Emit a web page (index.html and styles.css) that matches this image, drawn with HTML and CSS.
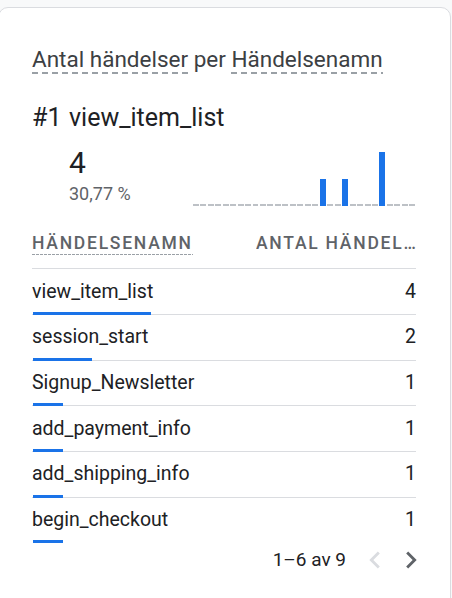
FILE: index.html
```html
<!DOCTYPE html>
<html lang="sv">
<head>
    <meta charset="UTF-8">
    <meta name="viewport" content="width=device-width, initial-scale=1.0">
    <title>Antal händelser per Händelsenamn</title>
    <link rel="stylesheet" href="styles.css">
</head>
<body>

    <div class="card">
        <h2 class="title"><span class="dim">Antal händelser</span> per <span class="dim">Händelsenamn</span></h2>

        <div class="top">
            <div class="rank">#1</div>
            <div class="top-name">view_item_list</div>
            <div></div>
            <div class="top-row">
                <div class="top-stats">
                    <div class="top-value">4</div>
                    <div class="top-pct">30,77 %</div>
                </div>
                <div class="spark" id="spark"></div>
            </div>
        </div>

        <div class="table">
            <div class="head">
                <div class="h-name"><span class="dim-sm">Händelsenamn</span></div>
                <div class="h-value"><span class="dim-sm">Antal händelser</span></div>
            </div>
            <div id="rows"></div>
        </div>

        <div class="pager">
            <span class="pager-text">1–6 av 9</span>
            <span class="pager-btn disabled">
                <svg viewBox="0 0 24 24" width="34" height="34"><path d="M15.41 7.41L14 6l-6 6 6 6 1.41-1.41L10.83 12z"/></svg>
            </span>
            <span class="pager-btn">
                <svg viewBox="0 0 24 24" width="34" height="34"><path d="M10 6L8.59 7.41 13.17 12l-4.58 4.59L10 18l6-6z"/></svg>
            </span>
        </div>
    </div>

    <script>
        // 30 days, only three with events
        const days = new Array(30).fill(0);
        days[17] = 1;
        days[20] = 1;
        days[25] = 2;

        const spark = document.getElementById('spark');
        days.forEach(v => {
            const slot = document.createElement('div');
            slot.className = 'slot';
            const bar = document.createElement('div');
            if (v > 0) {
                bar.className = 'bar';
                bar.style.height = (v * 27) + 'px';
            } else {
                bar.className = 'dash';
            }
            slot.appendChild(bar);
            spark.appendChild(slot);
        });

        const events = [
            ['view_item_list', 4],
            ['session_start', 2],
            ['Signup_Newsletter', 1],
            ['add_payment_info', 1],
            ['add_shipping_info', 1],
            ['begin_checkout', 1]
        ];

        const rows = document.getElementById('rows');
        events.forEach(([name, count]) => {
            const row = document.createElement('div');
            row.className = 'row';
            row.innerHTML = `
                <div class="line">
                    <span class="name">${name}</span>
                    <span class="count">${count}</span>
                </div>
                <div class="meter" style="width: ${count * 29.5}px"></div>`;
            rows.appendChild(row);
        });
    </script>
</body>
</html>
```

FILE: styles.css
```css
body {
    margin: 0;
    padding-top: 7px;
    background-color: #f8f9fa;
    font-family: Roboto, "Noto Sans", sans-serif;
    color: #3c4043;
    overflow: hidden;
}
.card {
    box-sizing: border-box;
    width: 453px;
    height: 620px;
    margin-left: -2px;
    padding: 37px 34px 0 33px;
    background: #fff;
    border: 1px solid #dadce0;
    border-radius: 10px;
}
.title {
    margin: 0;
    font-size: 22.5px;
    font-weight: 400;
    line-height: 28px;
    color: #3c4043;
}
.dim {
    padding-bottom: 1.5px;
    background-image: linear-gradient(to right, #9aa0a6 60%, transparent 60%);
    background-size: 10px 2px;
    background-repeat: repeat-x;
    background-position: left bottom;
}
.top {
    display: grid;
    grid-template-columns: 37px 1fr;
    margin-top: 30px;
    color: #202124;
}
.rank, .top-name {
    font-size: 25px;
    line-height: 30px;
}
.top-row {
    display: flex;
    align-items: flex-end;
    margin-top: 13px;
}
.top-stats {
    padding-bottom: 1px;
}
.top-value {
    font-size: 30px;
    line-height: 34px;
}
.top-pct {
    margin-top: 3.4px;
    font-size: 18px;
    line-height: 22px;
    color: #5f6368;
}
.spark {
    display: flex;
    align-items: flex-end;
    width: 224px;
    height: 56px;
    margin-left: auto;
}
.slot {
    flex: 1;
    padding: 0 0.75px;
}
.dash {
    height: 2px;
    background: #bdc1c6;
}
.bar {
    background: #1a73e8;
}
.table {
    margin-top: 26px;
}
.head {
    display: flex;
    justify-content: space-between;
    padding-bottom: 14px;
    border-bottom: 1px solid #dadce0;
    font-size: 17.5px;
    font-weight: 500;
    line-height: 22px;
    letter-spacing: 1.75px;
    text-transform: uppercase;
    color: #5f6368;
}
.h-value {
    width: 160px;
    overflow: hidden;
    white-space: nowrap;
    text-overflow: ellipsis;
}
.dim-sm {
    padding-bottom: 1.5px;
    background-image: linear-gradient(to right, #9aa0a6 70%, transparent 70%);
    background-size: 4px 1px;
    background-repeat: repeat-x;
    background-position: left bottom;
}
.row {
    box-sizing: border-box;
    display: flex;
    flex-direction: column;
    height: 45.67px;
    padding-top: 10.4px;
    border-bottom: 1px solid #dadce0;
}
.row:last-child {
    border-bottom-color: transparent;
}
.line {
    display: flex;
    justify-content: space-between;
    font-size: 19.5px;
    line-height: 24px;
    color: #202124;
}
.meter {
    height: 3px;
    margin: auto 0 -1px 1px;
    background: #1a73e8;
}
.pager {
    display: flex;
    justify-content: flex-end;
    align-items: center;
    margin-right: -12px;
    font-size: 19px;
    line-height: 34px;
    color: #202124;
}
.pager-text {
    margin-right: 10px;
}
.pager-btn {
    display: flex;
    width: 34px;
    height: 34px;
    margin-left: 2px;
    fill: #5f6368;
}
.pager-btn.disabled {
    fill: #dadce0;
}
```
